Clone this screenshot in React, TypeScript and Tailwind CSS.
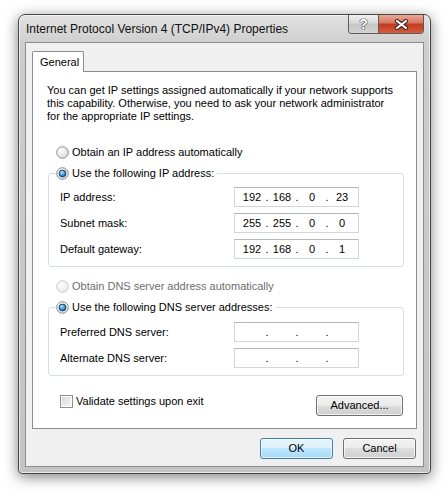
import React from 'react';

function RadioMark({ checked = false, disabled = false }: { checked?: boolean; disabled?: boolean }) {
  return (
    <svg width="13" height="13" viewBox="0 0 13 13" className="shrink-0">
      <defs>
        <radialGradient id="rbFill" cx="0.35" cy="0.3" r="0.8">
          <stop offset="0" stopColor="#ffffff" />
          <stop offset="1" stopColor="#d4d6d9" />
        </radialGradient>
        <radialGradient id="rbDis" cx="0.35" cy="0.3" r="0.8">
          <stop offset="0" stopColor="#fbfbfb" />
          <stop offset="1" stopColor="#ececec" />
        </radialGradient>
        <radialGradient id="rbDot" cx="0.4" cy="0.35" r="0.7">
          <stop offset="0" stopColor="#b9e6ff" />
          <stop offset="0.5" stopColor="#49a4e0" />
          <stop offset="1" stopColor="#17487a" />
        </radialGradient>
      </defs>
      <circle
        cx="6.5"
        cy="6.5"
        r="5.8"
        fill={disabled ? 'url(#rbDis)' : 'url(#rbFill)'}
        stroke={disabled ? '#c9c9c9' : '#8a8f96'}
        strokeWidth="1"
      />
      {checked && <circle cx="6.5" cy="6.5" r="3.4" fill="url(#rbDot)" stroke="#1d3d63" strokeWidth="0.9" />}
    </svg>
  );
}

function CheckMark() {
  return (
    <span className="block h-[13px] w-[13px] shrink-0 border border-[#8f8f8f] bg-white p-px">
      <span className="block h-full w-full bg-[linear-gradient(135deg,#d8d8d8,#f7f7f7)]" />
    </span>
  );
}

function IpField({ parts }: { parts: string[] }) {
  return (
    <div className="flex h-[20px] w-[125px] items-center border border-[#d2d5da] border-t-[#b3b6bc] bg-white pl-[6px]">
      {parts.map((p, i) => (
        <React.Fragment key={i}>
          {i > 0 && <span className="w-[8px] text-center">.</span>}
          <span className="w-[22px] text-center">{p}</span>
        </React.Fragment>
      ))}
    </div>
  );
}

function Row({ label, parts }: { label: string; parts: string[] }) {
  return (
    <div className="flex items-center pl-[11px]">
      <span className="w-[174px]">{label}</span>
      <IpField parts={parts} />
    </div>
  );
}

function Button({ children, primary = false, className = '' }: { children: React.ReactNode; primary?: boolean; className?: string }) {
  return (
    <button
      type="button"
      className={
        (primary
          ? 'border-[#3c7fb1] bg-[linear-gradient(#eaf6fd,#d9f0fc_50%,#bee6fd_50%,#a7d9f5)] '
          : 'border-[#707070] bg-[linear-gradient(#f2f2f2,#ebebeb_50%,#dddddd_50%,#cfcfcf)] ') +
        'flex h-[21px] items-center justify-center rounded-[3px] border text-black shadow-[inset_0_0_0_1px_rgba(255,255,255,0.7)] ' +
        className
      }
    >
      {children}
    </button>
  );
}

export default function App() {
  return (
    <div className="h-[504px] w-[448px] bg-white pl-[18px] pt-[14px] font-['Liberation_Sans',Arial,sans-serif] text-[11px] leading-[13px] text-black">
      <div className="flex h-[460px] w-[413px] flex-col rounded-t-[7px] rounded-b-[4px] border border-[#474747] bg-[linear-gradient(#e2e2e2,#cdcdcd_30px,#c4c4c4)] shadow-[inset_0_0_0_1px_rgba(255,255,255,0.6),0_3px_14px_rgba(0,0,0,0.5)]">
        <div className="flex h-[27px] shrink-0 items-start justify-between pl-[7px] pr-[6px]">
          <span className="pt-[6px] text-[12px] leading-[16px] text-[#111]">Internet Protocol Version 4 (TCP/IPv4) Properties</span>
          <div className="flex h-[19px] overflow-hidden rounded-b-[4px] border border-t-0 border-[#5b5b5b]">
            <div className="flex w-[29px] items-center justify-center bg-[linear-gradient(#efefef,#d9d9d9_45%,#c4c4c4_50%,#d3d3d3)] text-[14px] font-bold leading-none text-white [text-shadow:0_0_1px_#333,0_0_1px_#333,0_0_1px_#333]">
              ?
            </div>
            <div className="flex w-[45px] items-center justify-center border-l border-[#5b5b5b] bg-[linear-gradient(#eaa898,#d6765e_45%,#c13a20_50%,#d65b3d)]">
              <svg width="15" height="11" viewBox="0 0 15 11">
                <path d="M3 2 L12 9 M12 2 L3 9" stroke="#3b2a26" strokeWidth="4.2" strokeLinecap="round" />
                <path d="M3 2 L12 9 M12 2 L3 9" stroke="#ffffff" strokeWidth="2.2" strokeLinecap="round" />
              </svg>
            </div>
          </div>
        </div>

        <div className="mx-[6px] mb-[6px] flex flex-1 flex-col border border-[#8d8d8d] bg-[#f0f0f0] px-[6px] pt-[8px] pb-[7px]">
          <div className="relative z-10 -mb-px flex h-[21px] w-[52px] items-center rounded-t-[2px] border border-b-0 border-[#898c95] bg-white pl-[7px]">
            General
          </div>
          <div className="flex flex-1 flex-col border border-[#898c95] bg-white">
            <p className="whitespace-nowrap pl-[14px] pt-[12px]">
              You can get IP settings assigned automatically if your network supports
              <br />
              this capability. Otherwise, you need to ask your network administrator
              <br />
              for the appropriate IP settings.
            </p>

            <div className="mt-[23px] flex h-[13px] items-center gap-[3px] pl-[23px]">
              <RadioMark />
              <span>Obtain an IP address automatically</span>
            </div>

            <div className="ml-[15px] mr-[12px] mt-[14px] rounded-[3px] border border-[#d5dfe5] pb-[7px]">
              <div className="-mt-[7px] ml-[7px] flex h-[13px] w-fit items-center gap-[3px] bg-white pr-[3px]">
                <RadioMark checked />
                <span>Use the following IP address:</span>
              </div>
              <div className="mt-[7px] flex flex-col gap-[6px]">
                <Row label="IP address:" parts={['192', '168', '0', '23']} />
                <Row label="Subnet mask:" parts={['255', '255', '0', '0']} />
                <Row label="Default gateway:" parts={['192', '168', '0', '1']} />
              </div>
            </div>

            <div className="mt-[13px] flex h-[13px] items-center gap-[3px] pl-[23px] text-[#6d6d6d]">
              <RadioMark disabled />
              <span>Obtain DNS server address automatically</span>
            </div>

            <div className="ml-[15px] mr-[12px] mt-[14px] rounded-[3px] border border-[#d5dfe5] pb-[7px]">
              <div className="-mt-[7px] ml-[7px] flex h-[13px] w-fit items-center gap-[3px] bg-white pr-[3px]">
                <RadioMark checked />
                <span>Use the following DNS server addresses:</span>
              </div>
              <div className="mt-[8px] flex flex-col gap-[6px]">
                <Row label="Preferred DNS server:" parts={['', '', '', '']} />
                <Row label="Alternate DNS server:" parts={['', '', '', '']} />
              </div>
            </div>

            <div className="mt-[19px] flex items-start justify-between pl-[27px] pr-[13px]">
              <div className="flex h-[13px] items-center gap-[3px]">
                <CheckMark />
                <span>Validate settings upon exit</span>
              </div>
              <Button className="w-[87px]">Advanced...</Button>
            </div>
          </div>

          <div className="mt-[9px] flex justify-end gap-[10px] pr-[1px]">
            <Button primary className="w-[73px]">
              OK
            </Button>
            <Button className="w-[73px]">Cancel</Button>
          </div>
        </div>
      </div>
    </div>
  );
}
